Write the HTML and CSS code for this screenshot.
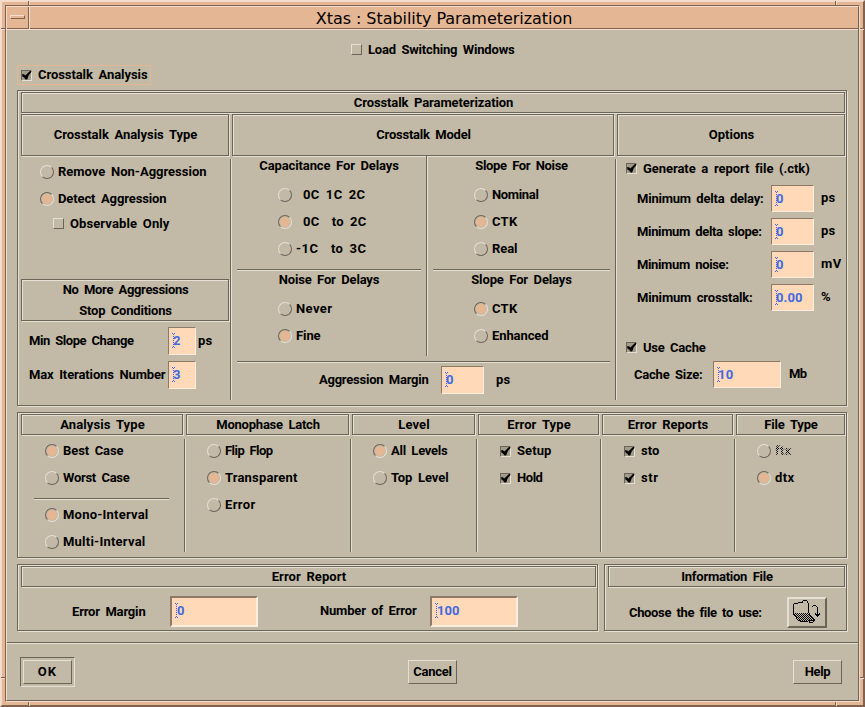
FILE: index.html
```
<!DOCTYPE html>
<html lang="en">
<head>
<meta charset="utf-8">
<title>Xtas : Stability Parameterization</title>
<link rel="stylesheet" href="styles.css">
</head>
<body>
<svg class="defs" aria-hidden="true">
  <symbol id="check" viewBox="0 0 11 11"><path d="M1 4.2H3L4.3 5.4 9 1H10.4V2L7.6 5.5 6.2 9.6H4.6L3 7.4 1.4 6.6Z" fill="#000"/></symbol>
  <symbol id="caret" viewBox="0 0 3 15"><path d="M0 0h1v1H0zM2 0h1v1H2zM1 1h1v1H1zM1 3h1v1H1zM1 5h1v1H1zM1 7h1v1H1zM1 9h1v1H1zM1 11h1v1H1zM1 13h1v1H1zM0 14h1v1H0zM2 14h1v1H2z" fill="#4169e1"/></symbol>
</svg>
<div class="window">
  <i class="tick v t l"></i><i class="tick v t r"></i><i class="tick v b l"></i><i class="tick v b r"></i>
  <i class="tick h t l"></i><i class="tick h t r"></i><i class="tick h b l"></i><i class="tick h b r"></i>
  <div class="inner"><div class="client">
    <header class="titlebar"><div class="menu"><i></i></div><h1><span data-fit="257">Xtas : Stability Parameterization</span></h1></header>
    <main>
      <div class="row load"><i class="cb"></i><span data-fit="147">Load Switching Windows</span></div>
      <div class="row enable"><i class="cb on"><svg><use href="#check"/></svg></i><span data-fit="110">Crosstalk Analysis</span></div>

      <section class="group crosstalk">
        <div class="head"><span data-fit="160">Crosstalk Parameterization</span></div>
        <div class="cols cols3 heads">
          <div class="head"><span data-fit="144">Crosstalk Analysis Type</span></div><i></i>
          <div class="head"><span data-fit="95">Crosstalk Model</span></div><i></i>
          <div class="head"><span data-fit="46">Options</span></div>
        </div>
        <div class="cols cols3 bodies">
          <div class="kind">
            <div class="radios">
              <div class="row"><i class="rb"></i><span data-fit="149">Remove Non-Aggression</span></div>
              <div class="row"><i class="rb on"></i><span data-fit="109">Detect Aggression</span></div>
            </div>
            <div class="row observable"><i class="cb"></i><span data-fit="100">Observable Only</span></div>
            <div class="head stop"><span data-fit="126">No More Aggressions</span><span data-fit="93">Stop Conditions</span></div>
            <div class="row field"><span class="lab"><span data-fit="105">Min Slope Change</span></span><div class="input s"><svg><use href="#caret"/></svg><span data-fit="8">2</span></div><span data-fit="15">ps</span></div>
            <div class="row field"><span class="lab"><span data-fit="137">Max Iterations Number</span></span><div class="input s"><svg><use href="#caret"/></svg><span data-fit="8">3</span></div></div>
          </div>
          <i class="vsep"></i>
          <div class="model">
            <div class="quad">
              <div class="half">
                <div class="sub"><span data-fit="140">Capacitance For Delays</span></div>
                <div class="radios three">
                  <div class="row wide"><i class="rb"></i><span data-fit="63">0C 1C 2C</span></div>
                  <div class="row wide"><i class="rb on"></i><span data-fit="64">0C  to 2C</span></div>
                  <div class="row"><i class="rb"></i><span data-fit="71">-1C  to 3C</span></div>
                </div>
                <i class="hsep"></i>
                <div class="sub low"><span data-fit="101">Noise For Delays</span></div>
                <div class="radios two">
                  <div class="row"><i class="rb"></i><span data-fit="37">Never</span></div>
                  <div class="row"><i class="rb on"></i><span data-fit="25">Fine</span></div>
                </div>
              </div>
              <i class="vsep"></i>
              <div class="half right">
                <div class="sub"><span data-fit="93">Slope For Noise</span></div>
                <div class="radios three">
                  <div class="row"><i class="rb"></i><span data-fit="47">Nominal</span></div>
                  <div class="row"><i class="rb on"></i><span data-fit="26">CTK</span></div>
                  <div class="row"><i class="rb"></i><span data-fit="26">Real</span></div>
                </div>
                <i class="hsep"></i>
                <div class="sub low"><span data-fit="101">Slope For Delays</span></div>
                <div class="radios two">
                  <div class="row"><i class="rb on"></i><span data-fit="26">CTK</span></div>
                  <div class="row"><i class="rb"></i><span data-fit="57">Enhanced</span></div>
                </div>
              </div>
            </div>
            <i class="hsep full"></i>
            <div class="row margin"><span class="lab"><span data-fit="110">Aggression Margin</span></span><div class="input m"><svg><use href="#caret"/></svg><span data-fit="8">0</span></div><span data-fit="15">ps</span></div>
          </div>
          <i class="vsep"></i>
          <div class="options">
            <div class="row report"><i class="cb on"><svg><use href="#check"/></svg></i><span data-fit="167">Generate a report file (.ctk)</span></div>
            <div class="mins">
              <div class="row"><span class="lab"><span data-fit="127">Minimum delta delay:</span></span><div class="input m"><svg><use href="#caret"/></svg><span data-fit="8">0</span></div><span class="unit" data-fit="15">ps</span></div>
              <div class="row"><span class="lab"><span data-fit="125">Minimum delta slope:</span></span><div class="input m"><svg><use href="#caret"/></svg><span data-fit="8">0</span></div><span class="unit" data-fit="15">ps</span></div>
              <div class="row"><span class="lab"><span data-fit="92">Minimum noise:</span></span><div class="input m"><svg><use href="#caret"/></svg><span data-fit="8">0</span></div><span class="unit" data-fit="21">mV</span></div>
              <div class="row"><span class="lab"><span data-fit="116">Minimum crosstalk:</span></span><div class="input m"><svg><use href="#caret"/></svg><span data-fit="27">0.00</span></div><span class="unit" data-fit="12">%</span></div>
            </div>
            <div class="row usecache"><i class="cb on"><svg><use href="#check"/></svg></i><span data-fit="63">Use Cache</span></div>
            <div class="row cache"><span class="lab"><span data-fit="69">Cache Size:</span></span><div class="input l"><svg><use href="#caret"/></svg><span data-fit="16">10</span></div><span class="unit" data-fit="18">Mb</span></div>
          </div>
        </div>
      </section>

      <section class="group analysis">
        <div class="cols cols6 heads">
          <div class="head"><span data-fit="85">Analysis Type</span></div><i></i>
          <div class="head"><span data-fit="104">Monophase Latch</span></div><i></i>
          <div class="head"><span data-fit="32">Level</span></div><i></i>
          <div class="head"><span data-fit="64">Error Type</span></div><i></i>
          <div class="head"><span data-fit="81">Error Reports</span></div><i></i>
          <div class="head"><span data-fit="54">File Type</span></div>
        </div>
        <div class="cols cols6 bodies">
          <div class="c1">
            <div class="radios">
              <div class="row"><i class="rb on"></i><span data-fit="61">Best Case</span></div>
              <div class="row"><i class="rb"></i><span data-fit="67">Worst Case</span></div>
            </div>
            <i class="hsep"></i>
            <div class="radios">
              <div class="row"><i class="rb on"></i><span data-fit="86">Mono-Interval</span></div>
              <div class="row"><i class="rb"></i><span data-fit="83">Multi-Interval</span></div>
            </div>
          </div>
          <i class="vsep"></i>
          <div class="c2 radios">
            <div class="row"><i class="rb"></i><span data-fit="48">Flip Flop</span></div>
            <div class="row"><i class="rb on"></i><span data-fit="73">Transparent</span></div>
            <div class="row"><i class="rb"></i><span data-fit="31">Error</span></div>
          </div>
          <i class="vsep"></i>
          <div class="c3 radios">
            <div class="row"><i class="rb on"></i><span data-fit="57">All Levels</span></div>
            <div class="row"><i class="rb"></i><span data-fit="58">Top Level</span></div>
          </div>
          <i class="vsep"></i>
          <div class="c4 radios">
            <div class="row"><i class="cb on"><svg><use href="#check"/></svg></i><span data-fit="35">Setup</span></div>
            <div class="row"><i class="cb on"><svg><use href="#check"/></svg></i><span data-fit="26">Hold</span></div>
          </div>
          <i class="vsep"></i>
          <div class="c5 radios">
            <div class="row"><i class="cb on"><svg><use href="#check"/></svg></i><span data-fit="19">sto</span></div>
            <div class="row"><i class="cb on"><svg><use href="#check"/></svg></i><span data-fit="18">str</span></div>
          </div>
          <i class="vsep"></i>
          <div class="c6 radios">
            <div class="row"><i class="rb"></i><span class="disabled" data-fit="17">ftx</span></div>
            <div class="row"><i class="rb on"></i><span data-fit="20">dtx</span></div>
          </div>
        </div>
      </section>

      <div class="reports">
        <section class="group errors">
          <div class="head"><span data-fit="75">Error Report</span></div>
          <div class="row">
            <span class="lab"><span data-fit="74">Error Margin</span></span><div class="input x"><svg><use href="#caret"/></svg><span data-fit="8">0</span></div>
            <span class="lab second"><span data-fit="97">Number of Error</span></span><div class="input x"><svg><use href="#caret"/></svg><span data-fit="23">100</span></div>
          </div>
        </section>
        <section class="group info">
          <div class="head"><span data-fit="92">Information File</span></div>
          <div class="row">
            <span class="lab"><span data-fit="133">Choose the file to use:</span></span>
            <button class="file" aria-label="Open file">
              <svg width="36" height="27" viewBox="0 0 36 27" shape-rendering="crispEdges">
                <defs><pattern id="weave" width="2" height="2" patternUnits="userSpaceOnUse"><path d="M0 0h1v1H0zM1 1h1v1H1z"/></pattern></defs>
                <path d="M5 4h4v1H5zM4 5h1v9H4zM9 3h5v1H9zM13 2h1v1H13zM14 1h4v1H14zM18 2h1v2H18zM19 4h1v10H19z"/>
                <path d="M4 14H20L26 21H21L22 22H11L4 15Z" fill="url(#weave)"/>
                <path d="M4 14h1v2H4zM5 16h1v1H5zM6 17h1v1H6zM7 18h1v2H7zM8 20h1v1H8zM9 21h2v1H9zM11 22h8v1H11zM20 14h1v2H20zM21 16h1v1H21zM22 17h1v1H22zM23 18h1v1H23zM24 19h1v1H24zM25 20h1v2H25zM20 21h5v1H20zM24 22h1v1H24zM20 23h4v1H20zM20 22h1v1H20z"/>
                <path d="M24 6h3v1H24zM23 7h1v1H23zM27 7h1v1H27zM28 8h1v8H28zM26 14h1v1H26zM30 14h1v1H30zM26 15h5v1H26zM27 16h3v1H27zM28 17h1v1H28z"/>
              </svg>
            </button>
          </div>
        </section>
      </div>
      <i class="divider"></i>
      <footer>
        <div class="default"><button><span data-fit="20">OK</span></button></div>
        <button class="cancel"><span data-fit="39">Cancel</span></button>
        <button><span data-fit="26">Help</span></button>
      </footer>
    </main>
  </div></div>
</div>
<script src="labels.js"></script>
</body>
</html>
```
FILE: styles.css
```
:root {
  --bg: #c2baa6;
  --light: #e5dfd4;
  --dark: #6b6558;
  --peach: #e5b693;
  --peach-light: #f4dccc;
  --peach-dark: #7f6250;
}
* { box-sizing: border-box; margin: 0; padding: 0; }
i { display: block; flex: none; }
body {
  width: 865px; height: 707px; overflow: hidden;
  font: bold 13px/14px Roboto, sans-serif; color: #000; background: var(--bg);
}
.defs { display: none; }
span[data-fit] { display: inline-block; white-space: pre; word-spacing: 2.5px; }

/* window frame */
.window {
  position: relative; width: 865px; height: 707px; padding: 3px; background: var(--peach);
  border: 2px solid; border-color: var(--peach-light) var(--peach-dark) var(--peach-dark) var(--peach-light);
}
.inner { height: 697px; border: 1px solid; border-color: var(--peach-dark) var(--peach-light) var(--peach-light) var(--peach-dark); }
.client { height: 695px; border: 1px solid; border-color: var(--peach-light) var(--dark) var(--dark) var(--peach-light); background: var(--bg); }
.tick { position: absolute; }
.tick.v { width: 2px; height: 4px; border-left: 1px solid var(--peach-dark); background: var(--peach-light); }
.tick.h { height: 2px; width: 4px; border-top: 1px solid var(--peach-dark); background: var(--peach-light); }
.tick.v.l { left: 26px; } .tick.v.r { left: 833px; }
.tick.v.t { top: -1px; } .tick.v.b { bottom: -1px; }
.tick.h.t { top: 26px; } .tick.h.b { top: 675px; }
.tick.h.l { left: -1px; } .tick.h.r { right: -1px; }
.titlebar { display: flex; height: 23px; background: var(--peach); border-bottom: 1px solid var(--peach-light); box-shadow: inset 0 -1px 0 var(--peach-dark); }
.menu { width: 23px; height: 22px; padding: 8px 0 0 3px; border-right: 1px solid var(--peach-light); box-shadow: inset -1px -1px 0 var(--peach-dark); }
.menu i { width: 15px; height: 4px; border: 1px solid; border-color: var(--peach-light) var(--peach-dark) var(--peach-dark) var(--peach-light); }
h1 { flex: 1; padding: 3px 0 0 0; text-align: center; font: 16px/18px "DejaVu Sans", sans-serif; }
h1 span[data-fit] { word-spacing: 0; }

/* controls */
.row { display: flex; align-items: center; }
.row > * { flex: none; }
.cb { width: 11px; height: 11px; border: 1px solid; border-color: var(--light) var(--dark) var(--dark) var(--light); }
.cb.on { border-color: var(--dark) var(--light) var(--light) var(--dark); background: #a39c8b; }
.cb svg { display: block; width: 11px; height: 11px; margin: -1px; }
.rb { width: 14px; height: 14px; border: 1px solid; border-radius: 50%; border-color: var(--light) var(--dark) var(--dark) var(--light); }
.rb.on { border-color: var(--dark) var(--light) var(--light) var(--dark); background: var(--peach); background-clip: content-box; padding: 1px; }
.rb + span { margin-left: 4px; }
.cb + span { margin-left: 6px; }
.radios { display: flex; flex-direction: column; gap: 13px; }
.radios .row { height: 14px; }
.lab { padding-left: 1px; }
.input {
  position: relative; display: flex; align-items: center; height: 27px; padding-left: 4px;
  background: #ffd9b8; color: #4169e1; border: 1px solid; border-color: #8e7867 #ffeee0 #ffeee0 #8e7867;
}
.input svg { position: absolute; left: 3px; top: 5px; width: 3px; height: 15px; }
.input.s { width: 28px; height: 28px; }
.input.m { width: 43px; }
.input.l { width: 68px; }
.input.x { width: 88px; height: 31px; border-width: 2px; padding: 0 0 2px 5px; }
.disabled {
  background: conic-gradient(#000 25%, transparent 0 50%, #000 0 75%, transparent 0) 0 0 / 2px 2px;
  -webkit-background-clip: text; background-clip: text; color: transparent;
}

/* etched panels and rules */
.group, .head { border: 1px solid var(--dark); box-shadow: 1px 1px 0 var(--light), inset 1px 1px 0 var(--light); }
.group { padding: 1px 1px 0 3px; }
.head { display: flex; flex-direction: column; align-items: center; justify-content: center; height: 21px; width: 100%; padding-left: 1px; }
.group > .head { width: 824px; }
.hsep { height: 2px; border-top: 1px solid var(--dark); background: var(--light); }
.vsep { width: 2px; border-left: 1px solid var(--dark); background: var(--light); }
.cols { display: grid; }
.cols > .vsep { margin-left: 1px; }
.cols3 { grid-template-columns: 208px 3px 382px 3px 228px; }
.cols6 { grid-template-columns: 162px 3px 163px 3px 123px 3px 121px 3px 131px 3px 109px; }

main { display: block; }
.load { height: 11px; margin: 14px 0 0 344px; }
.enable { width: 134px; height: 20px; margin: 10px 0 0 10px; padding-left: 3px; border: 1px solid var(--peach); }

/* crosstalk group */
.crosstalk { width: 830px; height: 316px; margin: 5px 0 0 10px; }
.crosstalk .heads { margin-top: 1px; }
.crosstalk .heads .head { height: 42px; }
.crosstalk .bodies > .vsep { height: 241px; margin-top: 3px; }
.kind { padding-top: 9px; }
.kind .radios { padding-left: 19px; }
.observable { height: 11px; margin: 12px 0 0 32px; }
.kind .stop { height: 42px; margin-top: 50px; gap: 7px; }
.field { height: 28px; margin-top: 6px; padding-left: 7px; }
.field .lab { width: 140px; }
.field > span:last-child { margin-left: 2px; }
.quad { display: grid; grid-template-columns: 194px 2px 186px; height: 200px; }
.half { padding-left: 5px; }
.half.right { padding: 0 4px 0 5px; }
.half > .hsep { width: 184px; margin-top: 13px; }
.half.right > .hsep { width: 177px; }
.sub { width: 184px; height: 20px; display: flex; align-items: center; justify-content: center; }
.right .sub { width: 177px; }
.sub.low { height: 18px; }
.half .radios { padding-left: 41px; }
.half.right .radios { padding-left: 41px; }
.radios.three { margin-top: 12px; }
.radios.two { margin-top: 13px; }
.wide .rb + span { margin-left: 11px; }
.hsep.full { width: 373px; margin: 5px 0 0 5px; }
.margin { height: 28px; margin-top: 3px; padding-left: 86px; }
.margin .lab { width: 123px; }
.margin .input { height: 28px; }
.margin > span:last-child { margin-left: 12px; }
.report { height: 11px; margin: 7px 0 0 9px; }
.mins { display: grid; gap: 6px; margin: 11px 0 0 19px; }
.mins .lab { width: 135px; }
.unit { margin: -1px 0 0 7px; }
.usecache { height: 11px; margin: 31px 0 0 9px; }
.cache { margin: 8px 0 0 16px; }
.cache .lab { width: 80px; }
.cache .unit { margin-left: 8px; }

/* analysis group */
.analysis { width: 830px; height: 146px; margin: 6px 0 0 10px; }
.analysis .bodies > .vsep { height: 113px; margin-top: 4px; }
.analysis .bodies .radios, .c1 { padding-top: 9px; }
.c1 .radios { padding: 0 0 0 24px !important; }
.c1 .hsep { width: 135px; margin: 13px 0 8px 13px; }
.c2 { padding-left: 21px; }
.c3 { padding-left: 21px; }
.c4, .c5 { padding-left: 22px; }
.c6 { padding-left: 21px; }

/* report and file groups */
.reports { display: flex; gap: 6px; margin: 6px 0 0 10px; height: 67px; }
.errors { width: 581px; }
.group.errors > .head { width: 575px; }
.errors .row { margin-top: 9px; padding-left: 50px; }
.errors .lab { width: 99px; }
.errors .lab.second { width: 110px; padding-left: 0; margin: -2px 0 0 62px; }
.info { width: 243px; }
.group.info > .head { width: 237px; }
.info .row { margin-top: 10px; padding-left: 20px; }
.info .lab { width: 159px; }
button { font: inherit; color: inherit; display: flex; align-items: center; justify-content: center; width: 49px; height: 24px; background: none; border: 1px solid; border-color: var(--light) var(--dark) var(--dark) var(--light); }
button.file { width: 40px; height: 31px; border-width: 2px; }
.divider { height: 2px; margin-top: 11px; border-top: 1px solid var(--dark); background: var(--light); }
footer { display: flex; justify-content: space-between; align-items: center; height: 30px; margin: 13px 16px 0 13px; }
.default { height: 30px; padding: 2px; border: 1px solid; border-color: var(--dark) var(--light) var(--light) var(--dark); }
.cancel { margin-right: 3px; }
```
FILE: labels.js
```
// Spread each label's letters so that it fills its design width.
document.querySelectorAll('[data-fit]').forEach(function (el) {
  var spare = Number(el.dataset.fit) - 0.5 - el.getBoundingClientRect().width;
  el.style.letterSpacing = spare / el.textContent.length + 'px';
});
```
